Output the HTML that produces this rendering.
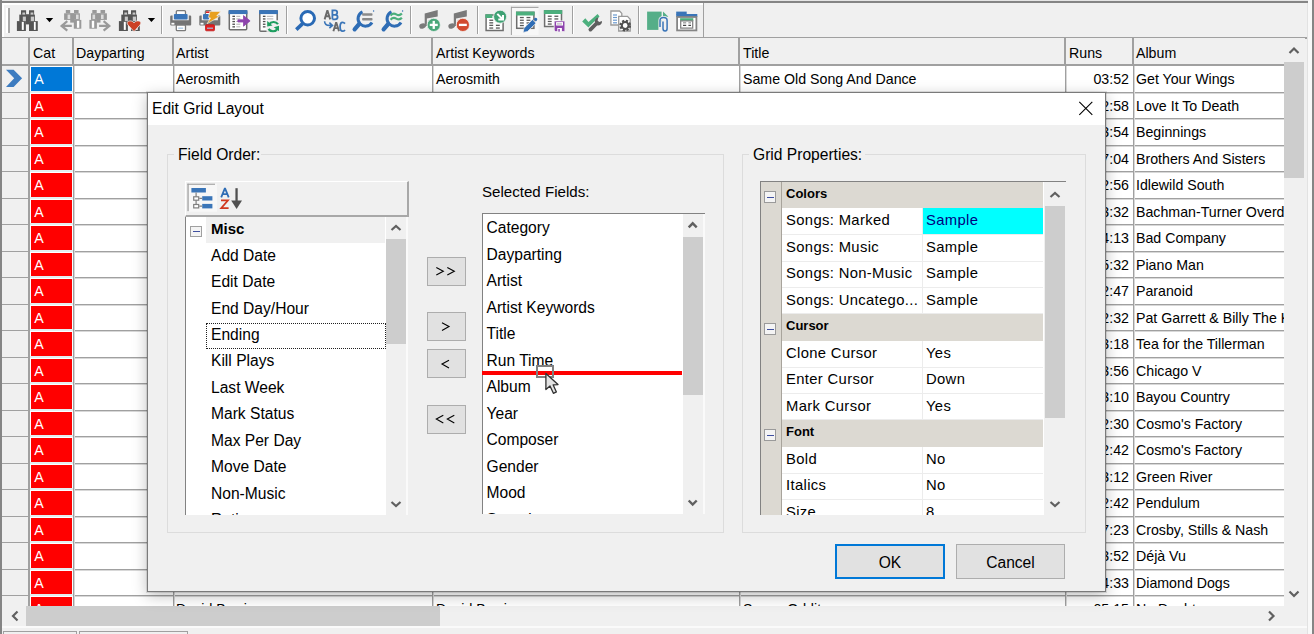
<!DOCTYPE html><html><head><meta charset="utf-8"><style>

*{box-sizing:border-box;margin:0;padding:0}
html,body{width:1314px;height:634px;overflow:hidden;background:#f0f0f0;font-family:"Liberation Sans",sans-serif;}
.ab{position:absolute}
.t{position:absolute;white-space:pre;color:#000}

</style></head><body>
<div class="ab" style="left:0;top:0;width:1314px;height:1px;background:#e6e6e6"></div>
<div class="ab" style="left:0;top:1px;width:1308px;height:2px;background:#858585"></div>
<div class="ab" style="left:0;top:0;width:2px;height:634px;background:#858585"></div>
<div class="ab" style="left:2px;top:3px;width:701px;height:2px;background:#fff"></div>
<div class="ab" style="left:2px;top:3px;width:2px;height:35px;background:#fff"></div>
<div class="ab" style="left:1308px;top:0;width:4px;height:634px;background:#f8f8f8"></div>
<div class="ab" style="left:1312px;top:0;width:2px;height:634px;background:#858585"></div>
<div class="ab" style="left:1307px;top:3px;width:1px;height:631px;background:#e2e2e2"></div>
<div class="ab" style="left:703px;top:3px;width:1px;height:35px;background:#a0a0a0"></div>
<div class="ab" style="left:2px;top:37px;width:1305px;height:2px;background:#a0a0a0"></div>
<div class="ab" style="left:6px;top:8px;width:2px;height:25px;background:#fff"></div>
<div class="ab" style="left:8px;top:8px;width:2px;height:25px;background:#a8a8a8"></div>
<svg class="ab" style="left:0;top:0" width="710" height="38" viewBox="0 0 710 38"><g transform="translate(14,8)" fill="#555555"><rect x="7" y="2.25" width="5.1" height="4.6"/><rect x="15" y="2.25" width="5.1" height="4.6"/><rect x="12" y="6.4" width="3" height="10"/><rect x="5.3" y="6.6" width="15.6" height="6.9"/><rect x="2.9" y="13.1" width="9" height="9.9"/><rect x="15" y="13.1" width="8.8" height="9.9"/><rect x="8.4" y="4.5" width="2.7" height="2.1" fill="#c8c8c8"/><rect x="16.6" y="4.5" width="2.7" height="2.1" fill="#c8c8c8"/><rect x="8.8" y="8.6" width="3.1" height="4.5" fill="#c8c8c8"/><rect x="16.8" y="8.6" width="3.3" height="4.5" fill="#c8c8c8"/><rect x="7.8" y="13.9" width="2" height="8" fill="#fff"/><rect x="19.9" y="13.9" width="1.8" height="8" fill="#fff"/></g><path d="M45.8 18 H53.2 L49.5 22.2 Z" fill="#000"/><g transform="translate(57,8)" fill="#999999"><rect x="8.8" y="2" width="4.4" height="3.5"/><rect x="17" y="2" width="4.6" height="3.5"/><rect x="7.1" y="5.3" width="15.8" height="6.6"/><rect x="13.2" y="5.3" width="3.8" height="9.3"/><rect x="16.8" y="11.9" width="7.5" height="8.8"/><rect x="10.6" y="6.6" width="2.6" height="4.4" fill="#dcdcdc"/><rect x="19" y="6.6" width="2.6" height="4.4" fill="#dcdcdc"/><rect x="19.9" y="12.8" width="2.4" height="7" fill="#fff"/><path d="M4 17.9 H14.8 M10.3 13.2 L4.6 17.9 L10.3 22.6" stroke="#999" stroke-width="2.2" fill="none"/></g><g transform="translate(57,8)" fill="#999999"><rect x="35.3" y="2" width="4.4" height="3.5"/><rect x="43.5" y="2" width="4.6" height="3.5"/><rect x="34" y="5.3" width="15.9" height="6.6"/><rect x="39.7" y="5.3" width="3.8" height="9.3"/><rect x="32.4" y="11.9" width="7.5" height="8.8"/><rect x="35.5" y="6.6" width="2.6" height="4.4" fill="#dcdcdc"/><rect x="44" y="6.6" width="2.6" height="4.4" fill="#dcdcdc"/><rect x="34.8" y="12.8" width="2.4" height="7" fill="#fff"/><path d="M42.1 17.9 H52.9 M46.6 13.2 L52.3 17.9 L46.6 22.6" stroke="#999" stroke-width="2.2" fill="none"/></g><g transform="translate(116,8)" fill="#555555"><rect x="7" y="2.25" width="5.1" height="4.6"/><rect x="15" y="2.25" width="5.1" height="4.6"/><rect x="12" y="6.4" width="3" height="10"/><rect x="5.3" y="6.6" width="15.6" height="6.9"/><rect x="2.9" y="13.1" width="9" height="9.9"/><rect x="15" y="13.1" width="8.8" height="9.9"/><rect x="8.4" y="4.5" width="2.7" height="2.1" fill="#c8c8c8"/><rect x="16.6" y="4.5" width="2.7" height="2.1" fill="#c8c8c8"/><rect x="8.8" y="8.6" width="3.1" height="4.5" fill="#c8c8c8"/><rect x="16.8" y="8.6" width="3.3" height="4.5" fill="#c8c8c8"/><rect x="7.8" y="13.9" width="2" height="8" fill="#fff"/><rect x="19.9" y="13.9" width="1.8" height="8" fill="#fff"/></g><path d="M134 31.6 L128.2 25.2 C126 22.6 127.5 20.9 130.3 20.9 C132.2 20.9 133.4 22 134 23 C134.6 22 135.8 20.9 137.7 20.9 C140.5 20.9 142 22.6 139.8 25.2 Z" fill="#cc4125" stroke="#f0f0f0" stroke-width="0.8"/><path d="M147.8 18 H155.1 L151.45 22.1 Z" fill="#000"/><rect x="161" y="6" width="1" height="28" fill="#a0a0a0"/><rect x="162" y="6" width="1" height="28" fill="#fff"/><g transform="translate(166,7)"><rect x="10.3" y="3.7" width="9.2" height="5" rx="1" fill="#fff" stroke="#7a7a7a" stroke-width="1.3"/><path d="M4.2 9.6 Q4.2 8.6 5.2 8.6 H6.6 V13.2 H22.8 V8.6 H24.2 Q25.2 8.6 25.2 9.6 V17.5 Q25.2 18.5 24.2 18.5 H5.2 Q4.2 18.5 4.2 17.5 Z" fill="#747474"/><rect x="7.9" y="7.1" width="13.7" height="5.5" rx="1" fill="#3a75b8"/><rect x="5.4" y="15.8" width="3" height="1.8" fill="#fff"/><rect x="10.3" y="18" width="9.2" height="5.7" rx="1" fill="#fff" stroke="#7a7a7a" stroke-width="1.3"/><rect x="12.2" y="20.6" width="5" height="1.1" fill="#9bbfe0"/></g><g transform="translate(166,7)"><rect x="39.4" y="3.7" width="5.6" height="5" rx="1" fill="#fff" stroke="#7a7a7a" stroke-width="1.3"/><rect x="40" y="4.4" width="3.7" height="1.6" fill="#e02020"/><path d="M33.3 9.6 Q33.3 8.6 34.3 8.6 H35.7 V13.2 H51.9 V8.6 H53.3 Q54.3 8.6 54.3 9.6 V17.5 Q54.3 18.5 53.3 18.5 H34.3 Q33.3 18.5 33.3 17.5 Z" fill="#747474"/><rect x="37" y="7.1" width="6" height="5.5" rx="1" fill="#3a75b8"/><rect x="34.5" y="15.8" width="3" height="1.8" fill="#fff"/><rect x="39.5" y="17.7" width="9" height="6.1" rx="1" fill="#e02020" stroke="#c01818" stroke-width="0.8"/><rect x="41" y="20.6" width="6" height="1.2" fill="#9bbfe0"/><path d="M44.1 4.4 L54.7 4.4 L50.8 8.8 L53.4 9.5 L41 16.8 L44.6 11 L42.4 10.4 Z" fill="#e8a020" stroke="#f0f0f0" stroke-width="0.6"/></g><g transform="translate(226,7)"><rect x="3.3" y="3.8" width="17.4" height="18.900000000000002" rx="1" fill="#fff" stroke="#6e6e6e" stroke-width="1.5"/><rect x="2.6" y="3.1" width="18.8" height="4" fill="#3a75b8"/><rect x="6.4" y="8.7" width="2.6" height="1.3" fill="#505050"/><rect x="10.3" y="8.8" width="4" height="1" fill="#b0b0b0"/><rect x="6.4" y="11.3" width="2.6" height="1.3" fill="#505050"/><rect x="10.3" y="11.4" width="4" height="1" fill="#b0b0b0"/><rect x="6.4" y="13.9" width="2.6" height="1.3" fill="#505050"/><rect x="10.3" y="14.0" width="4" height="1" fill="#b0b0b0"/><rect x="6.4" y="16.6" width="2.6" height="1.3" fill="#505050"/><rect x="10.3" y="16.7" width="4" height="1" fill="#b0b0b0"/><rect x="6.4" y="19.2" width="2.6" height="1.3" fill="#505050"/><rect x="10.3" y="19.3" width="4" height="1" fill="#b0b0b0"/><rect x="33.8" y="3.8" width="17.4" height="20.5" rx="1" fill="#fff" stroke="#6e6e6e" stroke-width="1.5"/><rect x="33.1" y="3.1" width="18.8" height="4" fill="#3a75b8"/><rect x="36.9" y="8.7" width="2.6" height="1.3" fill="#505050"/><rect x="40.8" y="8.8" width="6.5" height="1" fill="#b0b0b0"/><rect x="36.9" y="11.3" width="2.6" height="1.3" fill="#505050"/><rect x="40.8" y="11.4" width="6.5" height="1" fill="#b0b0b0"/><rect x="36.9" y="13.9" width="2.6" height="1.3" fill="#505050"/><rect x="40.8" y="14.0" width="6.5" height="1" fill="#b0b0b0"/><rect x="36.9" y="16.6" width="2.6" height="1.3" fill="#505050"/><rect x="40.8" y="16.7" width="6.5" height="1" fill="#b0b0b0"/><rect x="36.9" y="19.2" width="2.6" height="1.3" fill="#505050"/><rect x="40.8" y="19.3" width="6.5" height="1" fill="#b0b0b0"/><path d="M11.9 12.8 H17.5 V8.6 L24.1 13.9 L17.5 19.2 V15 H11.9 Z" fill="#8e44ad" stroke="#8e44ad" stroke-width="0.8" stroke-linejoin="round"/><rect x="40.5" y="13.3" width="13" height="11.5" fill="#f0f0f0"/><path d="M43 17.5 A5.5 5.5 0 0 1 52 17.2 M51.5 21.8 A5.5 5.5 0 0 1 42.5 22" stroke="#1e9e60" stroke-width="2.2" fill="none"/><path d="M41.2 14 L41.2 19.5 L46.5 18.6 Z M53 18.8 L53 24.2 L47.8 20.2 Z" fill="#1e9e60"/></g><rect x="286" y="6" width="1" height="28" fill="#a0a0a0"/><rect x="287" y="6" width="1" height="28" fill="#fff"/><g transform="translate(292,7)"><circle cx="15.7" cy="11.25" r="6.8" fill="#fff" stroke="#2a6ab5" stroke-width="3"/><path d="M10.6 16.6 L4.3 22.6" stroke="#2a6ab5" stroke-width="3.6"/><path d="M32.6 12.4 L35.4 3.3 L38.2 12.4 M33.7 9.2 H37.1" stroke="#6a6a6a" stroke-width="1.9" fill="none" stroke-linejoin="bevel"/><path d="M40.4 12.3 V3.4 H43 Q45.2 3.4 45.2 5.6 Q45.2 7.8 43 7.8 H40.4 M43 7.8 Q45.6 7.8 45.6 10 Q45.6 12.3 43 12.3 H40.4" stroke="#3a75b8" stroke-width="1.8" fill="none"/><path d="M32.6 14.2 Q32.6 18.4 37.5 18.4 H40.5 M37.4 15.6 L40.5 18.4 L37.4 21.2" stroke="#3a75b8" stroke-width="1.6" fill="none"/><path d="M41.4 24.3 L44.2 15.2 L47 24.3 M42.5 21.1 H45.9" stroke="#6a6a6a" stroke-width="1.9" fill="none" stroke-linejoin="bevel"/><path d="M53 16.6 Q52 15.4 50.6 15.4 Q48.1 15.4 48.1 19.8 Q48.1 24.2 50.6 24.2 Q52 24.2 53 23" stroke="#3a75b8" stroke-width="1.8" fill="none"/></g><g transform="translate(350,7)"><path d="M12.5 4.8 A7.5 7.5 0 1 0 22 15.5" stroke="#2f6db5" stroke-width="3" fill="none"/><path d="M9.2 17 L4.6 22.3" stroke="#2f6db5" stroke-width="4.2" stroke-linecap="round"/><circle cx="23.6" cy="4" r="0.7" fill="#2f6db5"/><path d="M41.5 4.8 A7.5 7.5 0 1 0 51 15.5" stroke="#2f6db5" stroke-width="3" fill="none"/><path d="M38.2 17 L33.6 22.3" stroke="#2f6db5" stroke-width="4.2" stroke-linecap="round"/><circle cx="52.6" cy="4" r="0.7" fill="#2f6db5"/><rect x="12.1" y="6.2" width="10.4" height="2.6" rx="0.8" fill="#8a8a8a"/><rect x="12.1" y="11" width="10.4" height="2.5" rx="0.8" fill="#8a8a8a"/><path d="M40.6 8.6 Q43 5.6 46.3 7.4 Q49.5 9.2 51.9 6.6 M40.6 12.8 Q43 9.8 46.3 11.6 Q49.5 13.4 51.9 10.8" stroke="#4caf7d" stroke-width="2.2" fill="none"/></g><rect x="410" y="6" width="1" height="28" fill="#a0a0a0"/><rect x="411" y="6" width="1" height="28" fill="#fff"/><g transform="translate(415,7)"><path d="M9.7 6.4 L22.7 3.1 V9.5 L11.9 11.6 V19 H9.7 Z" fill="#7a7a7a"/><ellipse cx="7.6" cy="19" rx="3.4" ry="2.6" fill="#7a7a7a" transform="rotate(-15 7.6 19)"/><path d="M38.8 6.4 L51.8 3.1 V9.5 L41.0 11.6 V19 H38.8 Z" fill="#7a7a7a"/><ellipse cx="36.7" cy="19" rx="3.4" ry="2.6" fill="#7a7a7a" transform="rotate(-15 36.7 19)"/><circle cx="18.75" cy="17.9" r="6.6" fill="#4aa77a" stroke="#f0f0f0" stroke-width="0.8"/><rect x="17.6" y="13.9" width="2.3" height="8" fill="#fff"/><rect x="14.75" y="16.75" width="8" height="2.3" fill="#fff"/><circle cx="47.85" cy="17.9" r="6.6" fill="#d24a2e" stroke="#f0f0f0" stroke-width="0.8"/><rect x="43.9" y="16.75" width="7.9" height="2.3" fill="#fff"/></g><rect x="477" y="6" width="1" height="28" fill="#a0a0a0"/><rect x="478" y="6" width="1" height="28" fill="#fff"/><g transform="translate(482,5)"><rect x="4.1" y="10" width="17" height="15.5" fill="#fff" stroke="#6e6e6e" stroke-width="1.5"/><rect x="3.4" y="9.3" width="7" height="3.7" fill="#4caf7d"/><rect x="7.3" y="14.6" width="3.9" height="1.3" fill="#5a5a5a"/><rect x="7.3" y="17.2" width="3.9" height="1.3" fill="#5a5a5a"/><rect x="7.3" y="19.7" width="3.9" height="1.3" fill="#5a5a5a"/><rect x="7.3" y="22.4" width="3.9" height="1.3" fill="#5a5a5a"/><rect x="13.9" y="19.7" width="3.9" height="1.3" fill="#5a5a5a"/><rect x="13.9" y="22.4" width="3.9" height="1.3" fill="#5a5a5a"/><circle cx="18.1" cy="11.7" r="6.5" fill="#3fa174" stroke="#f0f0f0" stroke-width="0.8"/><path d="M15.3 8.9 L20.2 13.8 M21 9.9 V14.6 H16.3" stroke="#fff" stroke-width="2" fill="none"/><rect x="29" y="2" width="27.5" height="28" fill="#f7f7f7"/><rect x="29" y="1.8" width="27.5" height="1.2" fill="#a8a8a8"/><rect x="28.9" y="1.8" width="1" height="28.2" fill="#a0a0a0"/><rect x="34.7" y="7.3" width="17.2" height="16" fill="#fff" stroke="#6e6e6e" stroke-width="1.5"/><rect x="34" y="6.6" width="18.6" height="3.9" fill="#4caf7d"/><rect x="37.9" y="11.9" width="3.9" height="1.3" fill="#5a5a5a"/><rect x="44.5" y="11.9" width="3.9" height="1.3" fill="#5a5a5a"/><rect x="37.9" y="14.6" width="3.9" height="1.3" fill="#5a5a5a"/><rect x="44.5" y="14.6" width="3.9" height="1.3" fill="#5a5a5a"/><rect x="37.9" y="17.299999999999997" width="3.9" height="1.3" fill="#5a5a5a"/><rect x="44.5" y="17.299999999999997" width="3.9" height="1.3" fill="#5a5a5a"/><rect x="37.9" y="19.9" width="3.9" height="1.3" fill="#5a5a5a"/><rect x="44.5" y="19.9" width="3.9" height="1.3" fill="#5a5a5a"/><path d="M41.1 27.4 L42 23.2 L50.4 14.6 L54 18.2 L45.4 26.6 Z" fill="#2f6db5" stroke="#f0f0f0" stroke-width="0.7"/><path d="M51.6 14.2 L52.7 13.1 Q53.8 12.2 54.9 13.3 Q55.8 14.4 54.9 15.4 L53.8 16.5 Z" fill="#2f6db5"/></g><g transform="translate(540,5)"><rect x="4.6" y="5.8" width="16.9" height="15.7" fill="#fff" stroke="#6e6e6e" stroke-width="1.5"/><rect x="3.9" y="5.1" width="18.3" height="3.9" fill="#4caf7d"/><rect x="7.8" y="10.6" width="3.9" height="1.3" fill="#5a5a5a"/><rect x="7.8" y="13.3" width="3.9" height="1.3" fill="#5a5a5a"/><rect x="7.8" y="15.799999999999999" width="3.9" height="1.3" fill="#5a5a5a"/><rect x="7.8" y="18.4" width="3.9" height="1.3" fill="#5a5a5a"/><rect x="14.4" y="10.6" width="3.9" height="1.3" fill="#5a5a5a"/><rect x="14.4" y="13.3" width="3.9" height="1.3" fill="#5a5a5a"/><path d="M14.2 15.9 H24.9 V26.6 H15.6 L14.2 25.2 Z" fill="#8e44ad" stroke="#f0f0f0" stroke-width="0.8"/><rect x="16.1" y="17.1" width="6.9" height="3.4" fill="#fff"/><rect x="17" y="18.5" width="5" height="0.9" fill="#a0a0a0"/><rect x="17.3" y="23" width="4.6" height="3.6" fill="#fff"/><rect x="18.3" y="24" width="1.5" height="2.6" fill="#8e44ad"/></g><rect x="572" y="6" width="1" height="28" fill="#a0a0a0"/><rect x="573" y="6" width="1" height="28" fill="#fff"/><g transform="translate(578,5)"><path d="M4.2 16.4 L7.3 13.2 L10.5 16.9 L19.6 9 L21.5 11.5 L10.5 22.5 Z" fill="#4caf7d"/><path d="M12.4 24.6 L18.5 18.5" stroke="#f0f0f0" stroke-width="5.6"/><path d="M12.4 24.6 L18.5 18.5" stroke="#5f5f5f" stroke-width="3.8" stroke-linecap="round"/><path d="M17 17.5 A4 4 0 0 1 20.4 12.4 L19.6 15.4 L21.2 16.9 L24 15.9 A4 4 0 0 1 19 20.3 Z" fill="#5f5f5f"/><path d="M32.9 6 H41.5 L43.8 8.4 V20 H32.9 Z" fill="#fff" stroke="#9a9a9a" stroke-width="1.3"/><rect x="35" y="9.4" width="4" height="1.2" fill="#6a9ad0"/><rect x="35" y="11.9" width="4" height="1.2" fill="#6a9ad0"/><rect x="35" y="14.6" width="4" height="1.2" fill="#6a9ad0"/><rect x="35" y="17.2" width="4" height="1.2" fill="#6a9ad0"/><path d="M40.7 11.4 H49.5 L52.2 14.2 V26 H40.7 Z" fill="#fff" stroke="#9a9a9a" stroke-width="1.3"/><circle cx="47.2" cy="20.5" r="4.3" fill="none" stroke="#505050" stroke-width="3.2" stroke-dasharray="2 1.38"/><circle cx="47.2" cy="20.5" r="3.4" fill="none" stroke="#505050" stroke-width="2"/><circle cx="47.2" cy="20.5" r="1.6" fill="#fff"/></g><rect x="638" y="6" width="1" height="28" fill="#a0a0a0"/><rect x="639" y="6" width="1" height="28" fill="#fff"/><g transform="translate(642,5)"><path d="M5.1 6.6 H19.6 V24.9 H5.1 Z" fill="#55ae88"/><path d="M21 6.4 L26.4 11.7 H21 Z" fill="#55ae88"/><path d="M18 26 V15.5 Q18 12.6 21.55 12.6 Q25.1 12.6 25.1 15.5 V23.5 Q25.1 26 23.1 26 Q21 26 21 23.5 V16.5" stroke="#f0f0f0" stroke-width="3.2" fill="none"/><path d="M18 22 V15.5 Q18 12.6 21.55 12.6 Q25.1 12.6 25.1 15.5 V23.5 Q25.1 26 23.1 26 Q21 26 21 23.5 V16.5" stroke="#3a75b8" stroke-width="1.5" fill="none"/><rect x="34.2" y="6.6" width="10.5" height="3" fill="#3a75b8"/><rect x="34.2" y="9" width="21.1" height="3" fill="#3a75b8"/><rect x="35.1" y="12" width="19.3" height="13.4" fill="#fff" stroke="#858585" stroke-width="1.8"/><rect x="38.1" y="13.2" width="13.2" height="2.8" fill="#4caf7d"/><rect x="38.7" y="15.9" width="12" height="7.2" fill="#fff" stroke="#858585" stroke-width="1.3"/><rect x="41" y="17.3" width="3.2" height="1.1" fill="#888"/><rect x="46.4" y="17.3" width="2.6" height="1.1" fill="#888"/><rect x="41" y="19.8" width="3.2" height="1.1" fill="#303030"/><rect x="46.4" y="19.8" width="2.6" height="1.1" fill="#303030"/></g></svg>
<div class="ab" style="left:2px;top:38px;width:1282px;height:568px;background:#fff"></div>
<div class="ab" style="left:2px;top:38px;width:1282px;height:27px;background:#f0f0f0"></div>
<div class="ab" style="left:2px;top:64px;width:1282px;height:2px;background:#a0a0a0"></div>
<div class="ab" style="left:28px;top:38px;width:2px;height:27px;background:#a0a0a0"></div>
<div class="ab" style="left:72px;top:38px;width:2px;height:27px;background:#a0a0a0"></div>
<div class="ab" style="left:172px;top:38px;width:2px;height:27px;background:#a0a0a0"></div>
<div class="ab" style="left:431px;top:38px;width:2px;height:27px;background:#a0a0a0"></div>
<div class="ab" style="left:738px;top:38px;width:2px;height:27px;background:#a0a0a0"></div>
<div class="ab" style="left:1064px;top:38px;width:2px;height:27px;background:#a0a0a0"></div>
<div class="ab" style="left:1132px;top:38px;width:2px;height:27px;background:#a0a0a0"></div>
<div class="t" style="left:33px;top:45.78px;font-size:14.2px;line-height:14.2px;">Cat</div>
<div class="t" style="left:76px;top:45.78px;font-size:14.2px;line-height:14.2px;">Dayparting</div>
<div class="t" style="left:176px;top:45.78px;font-size:14.2px;line-height:14.2px;">Artist</div>
<div class="t" style="left:436px;top:45.78px;font-size:14.2px;line-height:14.2px;">Artist Keywords</div>
<div class="t" style="left:743px;top:45.78px;font-size:14.2px;line-height:14.2px;">Title</div>
<div class="t" style="left:1069px;top:45.78px;font-size:14.2px;line-height:14.2px;">Runs</div>
<div class="t" style="left:1136px;top:45.78px;font-size:14.2px;line-height:14.2px;">Album</div>
<div class="ab" style="left:2px;top:66px;width:26px;height:540px;background:#f0f0f0"></div>
<div class="ab" style="left:28px;top:66px;width:2px;height:540px;background:#a0a0a0"></div>
<div class="ab" style="left:0;top:0;width:1284px;height:606px;overflow:hidden">
<div class="ab" style="left:2px;top:92px;width:26px;height:1px;background:#a0a0a0"></div>
<div class="ab" style="left:30px;top:91px;width:43px;height:2px;background:#e4eef0"></div>
<div class="ab" style="left:73px;top:92px;width:1211px;height:1px;background:#a0a0a0"></div>
<div class="ab" style="left:73px;top:93px;width:1211px;height:1px;background:#d8d8d8"></div>
<div class="ab" style="left:31px;top:67px;width:41px;height:24px;background:#0078d7"></div>
<div class="t" style="left:34.2px;top:72.28px;font-size:14.2px;line-height:14.2px;color:#fff">A</div>
<div class="t" style="left:176px;top:72.28px;font-size:14.2px;line-height:14.2px;">Aerosmith</div>
<div class="t" style="left:436px;top:72.28px;font-size:14.2px;line-height:14.2px;">Aerosmith</div>
<div class="t" style="left:743px;top:72.28px;font-size:14.2px;line-height:14.2px;">Same Old Song And Dance</div>
<div class="t" style="left:1066px;top:72.28px;width:63px;text-align:right;font-size:14.2px;line-height:14.2px">03:52</div>
<div class="t" style="left:1136px;top:72.28px;font-size:14.2px;line-height:14.2px;">Get Your Wings</div>
<svg class="ab" style="left:0;top:60px" width="28" height="32" viewBox="0 60 28 32"><path d="M6 69.8 H13.6 L22.1 78.3 L13.6 87.1 H6 L14.2 78.3 Z" fill="#3d7cc0"/></svg>
<div class="ab" style="left:2px;top:118px;width:26px;height:1px;background:#a0a0a0"></div>
<div class="ab" style="left:30px;top:117px;width:43px;height:2px;background:#e4eef0"></div>
<div class="ab" style="left:73px;top:118px;width:1211px;height:1px;background:#a0a0a0"></div>
<div class="ab" style="left:73px;top:119px;width:1211px;height:1px;background:#d8d8d8"></div>
<div class="ab" style="left:31px;top:94px;width:41px;height:23px;background:#ff0000"></div>
<div class="t" style="left:34.2px;top:98.78px;font-size:14.2px;line-height:14.2px;color:#fff">A</div>
<div class="t" style="left:176px;top:98.78px;font-size:14.2px;line-height:14.2px;">Alice Cooper</div>
<div class="t" style="left:436px;top:98.78px;font-size:14.2px;line-height:14.2px;">Alice Cooper</div>
<div class="t" style="left:743px;top:98.78px;font-size:14.2px;line-height:14.2px;">I'm Eighteen</div>
<div class="t" style="left:1066px;top:98.78px;width:63px;text-align:right;font-size:14.2px;line-height:14.2px">02:58</div>
<div class="t" style="left:1136px;top:98.78px;font-size:14.2px;line-height:14.2px;">Love It To Death</div>
<div class="ab" style="left:2px;top:145px;width:26px;height:1px;background:#a0a0a0"></div>
<div class="ab" style="left:30px;top:144px;width:43px;height:2px;background:#e4eef0"></div>
<div class="ab" style="left:73px;top:145px;width:1211px;height:1px;background:#a0a0a0"></div>
<div class="ab" style="left:73px;top:146px;width:1211px;height:1px;background:#d8d8d8"></div>
<div class="ab" style="left:31px;top:120px;width:41px;height:24px;background:#ff0000"></div>
<div class="t" style="left:34.2px;top:125.28px;font-size:14.2px;line-height:14.2px;color:#fff">A</div>
<div class="t" style="left:176px;top:125.28px;font-size:14.2px;line-height:14.2px;">Chicago</div>
<div class="t" style="left:436px;top:125.28px;font-size:14.2px;line-height:14.2px;">Chicago</div>
<div class="t" style="left:743px;top:125.28px;font-size:14.2px;line-height:14.2px;">Beginnings</div>
<div class="t" style="left:1066px;top:125.28px;width:63px;text-align:right;font-size:14.2px;line-height:14.2px">03:54</div>
<div class="t" style="left:1136px;top:125.28px;font-size:14.2px;line-height:14.2px;">Beginnings</div>
<div class="ab" style="left:2px;top:171px;width:26px;height:1px;background:#a0a0a0"></div>
<div class="ab" style="left:30px;top:170px;width:43px;height:2px;background:#e4eef0"></div>
<div class="ab" style="left:73px;top:171px;width:1211px;height:1px;background:#a0a0a0"></div>
<div class="ab" style="left:73px;top:172px;width:1211px;height:1px;background:#d8d8d8"></div>
<div class="ab" style="left:31px;top:147px;width:41px;height:23px;background:#ff0000"></div>
<div class="t" style="left:34.2px;top:151.78px;font-size:14.2px;line-height:14.2px;color:#fff">A</div>
<div class="t" style="left:176px;top:151.78px;font-size:14.2px;line-height:14.2px;">Allman Brothers</div>
<div class="t" style="left:436px;top:151.78px;font-size:14.2px;line-height:14.2px;">Allman Brothers</div>
<div class="t" style="left:743px;top:151.78px;font-size:14.2px;line-height:14.2px;">Jessica</div>
<div class="t" style="left:1066px;top:151.78px;width:63px;text-align:right;font-size:14.2px;line-height:14.2px">07:04</div>
<div class="t" style="left:1136px;top:151.78px;font-size:14.2px;line-height:14.2px;">Brothers And Sisters</div>
<div class="ab" style="left:2px;top:198px;width:26px;height:1px;background:#a0a0a0"></div>
<div class="ab" style="left:30px;top:197px;width:43px;height:2px;background:#e4eef0"></div>
<div class="ab" style="left:73px;top:198px;width:1211px;height:1px;background:#a0a0a0"></div>
<div class="ab" style="left:73px;top:199px;width:1211px;height:1px;background:#d8d8d8"></div>
<div class="ab" style="left:31px;top:173px;width:41px;height:24px;background:#ff0000"></div>
<div class="t" style="left:34.2px;top:178.28px;font-size:14.2px;line-height:14.2px;color:#fff">A</div>
<div class="t" style="left:176px;top:178.28px;font-size:14.2px;line-height:14.2px;">Allman Brothers</div>
<div class="t" style="left:436px;top:178.28px;font-size:14.2px;line-height:14.2px;">Allman Brothers</div>
<div class="t" style="left:743px;top:178.28px;font-size:14.2px;line-height:14.2px;">Midnight Rider</div>
<div class="t" style="left:1066px;top:178.28px;width:63px;text-align:right;font-size:14.2px;line-height:14.2px">02:56</div>
<div class="t" style="left:1136px;top:178.28px;font-size:14.2px;line-height:14.2px;">Idlewild South</div>
<div class="ab" style="left:2px;top:224px;width:26px;height:1px;background:#a0a0a0"></div>
<div class="ab" style="left:30px;top:223px;width:43px;height:2px;background:#e4eef0"></div>
<div class="ab" style="left:73px;top:224px;width:1211px;height:1px;background:#a0a0a0"></div>
<div class="ab" style="left:73px;top:225px;width:1211px;height:1px;background:#d8d8d8"></div>
<div class="ab" style="left:31px;top:200px;width:41px;height:23px;background:#ff0000"></div>
<div class="t" style="left:34.2px;top:204.78px;font-size:14.2px;line-height:14.2px;color:#fff">A</div>
<div class="t" style="left:176px;top:204.78px;font-size:14.2px;line-height:14.2px;">BTO</div>
<div class="t" style="left:436px;top:204.78px;font-size:14.2px;line-height:14.2px;">BTO</div>
<div class="t" style="left:743px;top:204.78px;font-size:14.2px;line-height:14.2px;">Let It Ride</div>
<div class="t" style="left:1066px;top:204.78px;width:63px;text-align:right;font-size:14.2px;line-height:14.2px">03:32</div>
<div class="t" style="left:1136px;top:204.78px;font-size:14.2px;line-height:14.2px;">Bachman-Turner Overdrive II</div>
<div class="ab" style="left:2px;top:251px;width:26px;height:1px;background:#a0a0a0"></div>
<div class="ab" style="left:30px;top:250px;width:43px;height:2px;background:#e4eef0"></div>
<div class="ab" style="left:73px;top:251px;width:1211px;height:1px;background:#a0a0a0"></div>
<div class="ab" style="left:73px;top:252px;width:1211px;height:1px;background:#d8d8d8"></div>
<div class="ab" style="left:31px;top:226px;width:41px;height:24px;background:#ff0000"></div>
<div class="t" style="left:34.2px;top:231.28px;font-size:14.2px;line-height:14.2px;color:#fff">A</div>
<div class="t" style="left:176px;top:231.28px;font-size:14.2px;line-height:14.2px;">Bad Company</div>
<div class="t" style="left:436px;top:231.28px;font-size:14.2px;line-height:14.2px;">Bad Company</div>
<div class="t" style="left:743px;top:231.28px;font-size:14.2px;line-height:14.2px;">Can't Get Enough</div>
<div class="t" style="left:1066px;top:231.28px;width:63px;text-align:right;font-size:14.2px;line-height:14.2px">04:13</div>
<div class="t" style="left:1136px;top:231.28px;font-size:14.2px;line-height:14.2px;">Bad Company</div>
<div class="ab" style="left:2px;top:277px;width:26px;height:1px;background:#a0a0a0"></div>
<div class="ab" style="left:30px;top:276px;width:43px;height:2px;background:#e4eef0"></div>
<div class="ab" style="left:73px;top:277px;width:1211px;height:1px;background:#a0a0a0"></div>
<div class="ab" style="left:73px;top:278px;width:1211px;height:1px;background:#d8d8d8"></div>
<div class="ab" style="left:31px;top:253px;width:41px;height:23px;background:#ff0000"></div>
<div class="t" style="left:34.2px;top:257.78px;font-size:14.2px;line-height:14.2px;color:#fff">A</div>
<div class="t" style="left:176px;top:257.78px;font-size:14.2px;line-height:14.2px;">Billy Joel</div>
<div class="t" style="left:436px;top:257.78px;font-size:14.2px;line-height:14.2px;">Billy Joel</div>
<div class="t" style="left:743px;top:257.78px;font-size:14.2px;line-height:14.2px;">Piano Man</div>
<div class="t" style="left:1066px;top:257.78px;width:63px;text-align:right;font-size:14.2px;line-height:14.2px">05:32</div>
<div class="t" style="left:1136px;top:257.78px;font-size:14.2px;line-height:14.2px;">Piano Man</div>
<div class="ab" style="left:2px;top:304px;width:26px;height:1px;background:#a0a0a0"></div>
<div class="ab" style="left:30px;top:303px;width:43px;height:2px;background:#e4eef0"></div>
<div class="ab" style="left:73px;top:304px;width:1211px;height:1px;background:#a0a0a0"></div>
<div class="ab" style="left:73px;top:305px;width:1211px;height:1px;background:#d8d8d8"></div>
<div class="ab" style="left:31px;top:279px;width:41px;height:24px;background:#ff0000"></div>
<div class="t" style="left:34.2px;top:284.28px;font-size:14.2px;line-height:14.2px;color:#fff">A</div>
<div class="t" style="left:176px;top:284.28px;font-size:14.2px;line-height:14.2px;">Black Sabbath</div>
<div class="t" style="left:436px;top:284.28px;font-size:14.2px;line-height:14.2px;">Black Sabbath</div>
<div class="t" style="left:743px;top:284.28px;font-size:14.2px;line-height:14.2px;">Paranoid</div>
<div class="t" style="left:1066px;top:284.28px;width:63px;text-align:right;font-size:14.2px;line-height:14.2px">02:47</div>
<div class="t" style="left:1136px;top:284.28px;font-size:14.2px;line-height:14.2px;">Paranoid</div>
<div class="ab" style="left:2px;top:330px;width:26px;height:1px;background:#a0a0a0"></div>
<div class="ab" style="left:30px;top:329px;width:43px;height:2px;background:#e4eef0"></div>
<div class="ab" style="left:73px;top:330px;width:1211px;height:1px;background:#a0a0a0"></div>
<div class="ab" style="left:73px;top:331px;width:1211px;height:1px;background:#d8d8d8"></div>
<div class="ab" style="left:31px;top:306px;width:41px;height:23px;background:#ff0000"></div>
<div class="t" style="left:34.2px;top:310.78px;font-size:14.2px;line-height:14.2px;color:#fff">A</div>
<div class="t" style="left:176px;top:310.78px;font-size:14.2px;line-height:14.2px;">Bob Dylan</div>
<div class="t" style="left:436px;top:310.78px;font-size:14.2px;line-height:14.2px;">Bob Dylan</div>
<div class="t" style="left:743px;top:310.78px;font-size:14.2px;line-height:14.2px;">Knockin' On Heaven's Door</div>
<div class="t" style="left:1066px;top:310.78px;width:63px;text-align:right;font-size:14.2px;line-height:14.2px">02:32</div>
<div class="t" style="left:1136px;top:310.78px;font-size:14.2px;line-height:14.2px;">Pat Garrett &amp; Billy The Kid</div>
<div class="ab" style="left:2px;top:357px;width:26px;height:1px;background:#a0a0a0"></div>
<div class="ab" style="left:30px;top:356px;width:43px;height:2px;background:#e4eef0"></div>
<div class="ab" style="left:73px;top:357px;width:1211px;height:1px;background:#a0a0a0"></div>
<div class="ab" style="left:73px;top:358px;width:1211px;height:1px;background:#d8d8d8"></div>
<div class="ab" style="left:31px;top:332px;width:41px;height:24px;background:#ff0000"></div>
<div class="t" style="left:34.2px;top:337.28px;font-size:14.2px;line-height:14.2px;color:#fff">A</div>
<div class="t" style="left:176px;top:337.28px;font-size:14.2px;line-height:14.2px;">Cat Stevens</div>
<div class="t" style="left:436px;top:337.28px;font-size:14.2px;line-height:14.2px;">Cat Stevens</div>
<div class="t" style="left:743px;top:337.28px;font-size:14.2px;line-height:14.2px;">Wild World</div>
<div class="t" style="left:1066px;top:337.28px;width:63px;text-align:right;font-size:14.2px;line-height:14.2px">03:18</div>
<div class="t" style="left:1136px;top:337.28px;font-size:14.2px;line-height:14.2px;">Tea for the Tillerman</div>
<div class="ab" style="left:2px;top:383px;width:26px;height:1px;background:#a0a0a0"></div>
<div class="ab" style="left:30px;top:382px;width:43px;height:2px;background:#e4eef0"></div>
<div class="ab" style="left:73px;top:383px;width:1211px;height:1px;background:#a0a0a0"></div>
<div class="ab" style="left:73px;top:384px;width:1211px;height:1px;background:#d8d8d8"></div>
<div class="ab" style="left:31px;top:359px;width:41px;height:23px;background:#ff0000"></div>
<div class="t" style="left:34.2px;top:363.78px;font-size:14.2px;line-height:14.2px;color:#fff">A</div>
<div class="t" style="left:176px;top:363.78px;font-size:14.2px;line-height:14.2px;">Chicago</div>
<div class="t" style="left:436px;top:363.78px;font-size:14.2px;line-height:14.2px;">Chicago</div>
<div class="t" style="left:743px;top:363.78px;font-size:14.2px;line-height:14.2px;">Saturday In The Park</div>
<div class="t" style="left:1066px;top:363.78px;width:63px;text-align:right;font-size:14.2px;line-height:14.2px">03:56</div>
<div class="t" style="left:1136px;top:363.78px;font-size:14.2px;line-height:14.2px;">Chicago V</div>
<div class="ab" style="left:2px;top:410px;width:26px;height:1px;background:#a0a0a0"></div>
<div class="ab" style="left:30px;top:409px;width:43px;height:2px;background:#e4eef0"></div>
<div class="ab" style="left:73px;top:410px;width:1211px;height:1px;background:#a0a0a0"></div>
<div class="ab" style="left:73px;top:411px;width:1211px;height:1px;background:#d8d8d8"></div>
<div class="ab" style="left:31px;top:385px;width:41px;height:24px;background:#ff0000"></div>
<div class="t" style="left:34.2px;top:390.28px;font-size:14.2px;line-height:14.2px;color:#fff">A</div>
<div class="t" style="left:176px;top:390.28px;font-size:14.2px;line-height:14.2px;">CCR</div>
<div class="t" style="left:436px;top:390.28px;font-size:14.2px;line-height:14.2px;">CCR</div>
<div class="t" style="left:743px;top:390.28px;font-size:14.2px;line-height:14.2px;">Proud Mary</div>
<div class="t" style="left:1066px;top:390.28px;width:63px;text-align:right;font-size:14.2px;line-height:14.2px">03:10</div>
<div class="t" style="left:1136px;top:390.28px;font-size:14.2px;line-height:14.2px;">Bayou Country</div>
<div class="ab" style="left:2px;top:436px;width:26px;height:1px;background:#a0a0a0"></div>
<div class="ab" style="left:30px;top:435px;width:43px;height:2px;background:#e4eef0"></div>
<div class="ab" style="left:73px;top:436px;width:1211px;height:1px;background:#a0a0a0"></div>
<div class="ab" style="left:73px;top:437px;width:1211px;height:1px;background:#d8d8d8"></div>
<div class="ab" style="left:31px;top:412px;width:41px;height:23px;background:#ff0000"></div>
<div class="t" style="left:34.2px;top:416.78px;font-size:14.2px;line-height:14.2px;color:#fff">A</div>
<div class="t" style="left:176px;top:416.78px;font-size:14.2px;line-height:14.2px;">CCR</div>
<div class="t" style="left:436px;top:416.78px;font-size:14.2px;line-height:14.2px;">CCR</div>
<div class="t" style="left:743px;top:416.78px;font-size:14.2px;line-height:14.2px;">Up Around The Bend</div>
<div class="t" style="left:1066px;top:416.78px;width:63px;text-align:right;font-size:14.2px;line-height:14.2px">02:30</div>
<div class="t" style="left:1136px;top:416.78px;font-size:14.2px;line-height:14.2px;">Cosmo's Factory</div>
<div class="ab" style="left:2px;top:463px;width:26px;height:1px;background:#a0a0a0"></div>
<div class="ab" style="left:30px;top:462px;width:43px;height:2px;background:#e4eef0"></div>
<div class="ab" style="left:73px;top:463px;width:1211px;height:1px;background:#a0a0a0"></div>
<div class="ab" style="left:73px;top:464px;width:1211px;height:1px;background:#d8d8d8"></div>
<div class="ab" style="left:31px;top:438px;width:41px;height:24px;background:#ff0000"></div>
<div class="t" style="left:34.2px;top:443.28px;font-size:14.2px;line-height:14.2px;color:#fff">A</div>
<div class="t" style="left:176px;top:443.28px;font-size:14.2px;line-height:14.2px;">CCR</div>
<div class="t" style="left:436px;top:443.28px;font-size:14.2px;line-height:14.2px;">CCR</div>
<div class="t" style="left:743px;top:443.28px;font-size:14.2px;line-height:14.2px;">Lookin' Out My Back Door</div>
<div class="t" style="left:1066px;top:443.28px;width:63px;text-align:right;font-size:14.2px;line-height:14.2px">02:42</div>
<div class="t" style="left:1136px;top:443.28px;font-size:14.2px;line-height:14.2px;">Cosmo's Factory</div>
<div class="ab" style="left:2px;top:489px;width:26px;height:1px;background:#a0a0a0"></div>
<div class="ab" style="left:30px;top:488px;width:43px;height:2px;background:#e4eef0"></div>
<div class="ab" style="left:73px;top:489px;width:1211px;height:1px;background:#a0a0a0"></div>
<div class="ab" style="left:73px;top:490px;width:1211px;height:1px;background:#d8d8d8"></div>
<div class="ab" style="left:31px;top:465px;width:41px;height:23px;background:#ff0000"></div>
<div class="t" style="left:34.2px;top:469.78px;font-size:14.2px;line-height:14.2px;color:#fff">A</div>
<div class="t" style="left:176px;top:469.78px;font-size:14.2px;line-height:14.2px;">CCR</div>
<div class="t" style="left:436px;top:469.78px;font-size:14.2px;line-height:14.2px;">CCR</div>
<div class="t" style="left:743px;top:469.78px;font-size:14.2px;line-height:14.2px;">Bad Moon Rising</div>
<div class="t" style="left:1066px;top:469.78px;width:63px;text-align:right;font-size:14.2px;line-height:14.2px">03:12</div>
<div class="t" style="left:1136px;top:469.78px;font-size:14.2px;line-height:14.2px;">Green River</div>
<div class="ab" style="left:2px;top:516px;width:26px;height:1px;background:#a0a0a0"></div>
<div class="ab" style="left:30px;top:515px;width:43px;height:2px;background:#e4eef0"></div>
<div class="ab" style="left:73px;top:516px;width:1211px;height:1px;background:#a0a0a0"></div>
<div class="ab" style="left:73px;top:517px;width:1211px;height:1px;background:#d8d8d8"></div>
<div class="ab" style="left:31px;top:491px;width:41px;height:24px;background:#ff0000"></div>
<div class="t" style="left:34.2px;top:496.28px;font-size:14.2px;line-height:14.2px;color:#fff">A</div>
<div class="t" style="left:176px;top:496.28px;font-size:14.2px;line-height:14.2px;">CCR</div>
<div class="t" style="left:436px;top:496.28px;font-size:14.2px;line-height:14.2px;">CCR</div>
<div class="t" style="left:743px;top:496.28px;font-size:14.2px;line-height:14.2px;">Have You Ever Seen The Rain</div>
<div class="t" style="left:1066px;top:496.28px;width:63px;text-align:right;font-size:14.2px;line-height:14.2px">02:42</div>
<div class="t" style="left:1136px;top:496.28px;font-size:14.2px;line-height:14.2px;">Pendulum</div>
<div class="ab" style="left:2px;top:542px;width:26px;height:1px;background:#a0a0a0"></div>
<div class="ab" style="left:30px;top:541px;width:43px;height:2px;background:#e4eef0"></div>
<div class="ab" style="left:73px;top:542px;width:1211px;height:1px;background:#a0a0a0"></div>
<div class="ab" style="left:73px;top:543px;width:1211px;height:1px;background:#d8d8d8"></div>
<div class="ab" style="left:31px;top:518px;width:41px;height:23px;background:#ff0000"></div>
<div class="t" style="left:34.2px;top:522.78px;font-size:14.2px;line-height:14.2px;color:#fff">A</div>
<div class="t" style="left:176px;top:522.78px;font-size:14.2px;line-height:14.2px;">CSN</div>
<div class="t" style="left:436px;top:522.78px;font-size:14.2px;line-height:14.2px;">CSN</div>
<div class="t" style="left:743px;top:522.78px;font-size:14.2px;line-height:14.2px;">Suite: Judy Blue Eyes</div>
<div class="t" style="left:1066px;top:522.78px;width:63px;text-align:right;font-size:14.2px;line-height:14.2px">07:23</div>
<div class="t" style="left:1136px;top:522.78px;font-size:14.2px;line-height:14.2px;">Crosby, Stills &amp; Nash</div>
<div class="ab" style="left:2px;top:569px;width:26px;height:1px;background:#a0a0a0"></div>
<div class="ab" style="left:30px;top:568px;width:43px;height:2px;background:#e4eef0"></div>
<div class="ab" style="left:73px;top:569px;width:1211px;height:1px;background:#a0a0a0"></div>
<div class="ab" style="left:73px;top:570px;width:1211px;height:1px;background:#d8d8d8"></div>
<div class="ab" style="left:31px;top:544px;width:41px;height:24px;background:#ff0000"></div>
<div class="t" style="left:34.2px;top:549.28px;font-size:14.2px;line-height:14.2px;color:#fff">A</div>
<div class="t" style="left:176px;top:549.28px;font-size:14.2px;line-height:14.2px;">CSNY</div>
<div class="t" style="left:436px;top:549.28px;font-size:14.2px;line-height:14.2px;">CSNY</div>
<div class="t" style="left:743px;top:549.28px;font-size:14.2px;line-height:14.2px;">Teach Your Children</div>
<div class="t" style="left:1066px;top:549.28px;width:63px;text-align:right;font-size:14.2px;line-height:14.2px">03:52</div>
<div class="t" style="left:1136px;top:549.28px;font-size:14.2px;line-height:14.2px;">D&eacute;j&agrave; Vu</div>
<div class="ab" style="left:2px;top:595px;width:26px;height:1px;background:#a0a0a0"></div>
<div class="ab" style="left:30px;top:594px;width:43px;height:2px;background:#e4eef0"></div>
<div class="ab" style="left:73px;top:595px;width:1211px;height:1px;background:#a0a0a0"></div>
<div class="ab" style="left:73px;top:596px;width:1211px;height:1px;background:#d8d8d8"></div>
<div class="ab" style="left:31px;top:571px;width:41px;height:23px;background:#ff0000"></div>
<div class="t" style="left:34.2px;top:575.78px;font-size:14.2px;line-height:14.2px;color:#fff">A</div>
<div class="t" style="left:176px;top:575.78px;font-size:14.2px;line-height:14.2px;">David Bowie</div>
<div class="t" style="left:436px;top:575.78px;font-size:14.2px;line-height:14.2px;">David Bowie</div>
<div class="t" style="left:743px;top:575.78px;font-size:14.2px;line-height:14.2px;">Rebel Rebel</div>
<div class="t" style="left:1066px;top:575.78px;width:63px;text-align:right;font-size:14.2px;line-height:14.2px">04:33</div>
<div class="t" style="left:1136px;top:575.78px;font-size:14.2px;line-height:14.2px;">Diamond Dogs</div>
<div class="ab" style="left:2px;top:622px;width:26px;height:1px;background:#a0a0a0"></div>
<div class="ab" style="left:30px;top:621px;width:43px;height:2px;background:#e4eef0"></div>
<div class="ab" style="left:73px;top:622px;width:1211px;height:1px;background:#a0a0a0"></div>
<div class="ab" style="left:73px;top:623px;width:1211px;height:1px;background:#d8d8d8"></div>
<div class="ab" style="left:31px;top:597px;width:41px;height:24px;background:#ff0000"></div>
<div class="t" style="left:34.2px;top:602.28px;font-size:14.2px;line-height:14.2px;color:#fff">A</div>
<div class="t" style="left:176px;top:602.28px;font-size:14.2px;line-height:14.2px;">David Bowie</div>
<div class="t" style="left:436px;top:602.28px;font-size:14.2px;line-height:14.2px;">David Bowie</div>
<div class="t" style="left:743px;top:602.28px;font-size:14.2px;line-height:14.2px;">Space Oddity</div>
<div class="t" style="left:1066px;top:602.28px;width:63px;text-align:right;font-size:14.2px;line-height:14.2px">05:15</div>
<div class="t" style="left:1136px;top:602.28px;font-size:14.2px;line-height:14.2px;">No Doubt</div>
<div class="ab" style="left:73px;top:66px;width:1px;height:540px;background:#a0a0a0"></div>
<div class="ab" style="left:74px;top:66px;width:1px;height:540px;background:#d8d8d8"></div>
<div class="ab" style="left:173px;top:66px;width:1px;height:540px;background:#a0a0a0"></div>
<div class="ab" style="left:174px;top:66px;width:1px;height:540px;background:#d8d8d8"></div>
<div class="ab" style="left:432px;top:66px;width:1px;height:540px;background:#a0a0a0"></div>
<div class="ab" style="left:433px;top:66px;width:1px;height:540px;background:#d8d8d8"></div>
<div class="ab" style="left:739px;top:66px;width:1px;height:540px;background:#a0a0a0"></div>
<div class="ab" style="left:740px;top:66px;width:1px;height:540px;background:#d8d8d8"></div>
<div class="ab" style="left:1065px;top:66px;width:1px;height:540px;background:#a0a0a0"></div>
<div class="ab" style="left:1066px;top:66px;width:1px;height:540px;background:#d8d8d8"></div>
<div class="ab" style="left:1133px;top:66px;width:1px;height:540px;background:#a0a0a0"></div>
<div class="ab" style="left:1134px;top:66px;width:1px;height:540px;background:#d8d8d8"></div>
</div>
<div class="ab" style="left:1284px;top:38px;width:21px;height:568px;background:#f0f0f0"></div>
<div class="ab" style="left:1284px;top:62px;width:20px;height:116px;background:#cdcdcd"></div>
<svg class="ab" style="left:1284px;top:38px" width="20" height="24" viewBox="0 0 20 24"><path d="M5.5 15 L10 10.5 L14.5 15" stroke="#606060" stroke-width="2.2" fill="none"/></svg>
<svg class="ab" style="left:1284px;top:582px" width="20" height="24" viewBox="0 0 20 24"><path d="M5.5 9.5 L10 14 L14.5 9.5" stroke="#606060" stroke-width="2.2" fill="none"/></svg>
<div class="ab" style="left:2px;top:606px;width:1303px;height:20px;background:#f0f0f0"></div>
<div class="ab" style="left:26px;top:606px;width:414px;height:20px;background:#cdcdcd"></div>
<svg class="ab" style="left:4px;top:606px" width="20" height="20" viewBox="0 0 20 20"><path d="M13.5 5.5 L9 10 L13.5 14.5" stroke="#606060" stroke-width="2.2" fill="none"/></svg>
<svg class="ab" style="left:1262px;top:606px" width="20" height="20" viewBox="0 0 20 20"><path d="M7 5.5 L11.5 10 L7 14.5" stroke="#606060" stroke-width="2.2" fill="none"/></svg>
<div class="ab" style="left:2px;top:626px;width:1305px;height:2px;background:#fafafa"></div>
<div class="ab" style="left:3px;top:631px;width:74px;height:3px;border-top:1px solid #a0a0a0;border-left:1px solid #a0a0a0;border-right:1px solid #a0a0a0"></div>
<div class="ab" style="left:79px;top:631px;width:109px;height:3px;border-top:1px solid #a0a0a0;border-left:1px solid #a0a0a0;border-right:1px solid #a0a0a0"></div>
<div class="ab" style="left:147px;top:92px;width:959px;height:500px;background:#f0f0f0;border:1px solid #7a7a7a;box-shadow:0 0 0 1px rgba(0,0,0,0.10),0 4px 14px rgba(0,0,0,0.25)"></div>
<div class="ab" style="left:148px;top:93px;width:957px;height:32px;background:#fff"></div>
<div class="t" style="left:152px;top:100.69px;font-size:15.6px;line-height:15.6px;">Edit Grid Layout</div>
<svg class="ab" style="left:1075px;top:98px" width="21" height="21" viewBox="0 0 21 21"><path d="M4.3 3.9 L17.3 16.9 M17.3 3.9 L4.3 16.9" stroke="#000" stroke-width="1.1"/></svg>
<div class="ab" style="left:167px;top:154px;width:557px;height:379px;border:1px solid #dcdcdc"></div>
<div class="ab" style="left:174px;top:146px;width:87px;height:16px;background:#f0f0f0"></div>
<div class="t" style="left:178px;top:146.89px;font-size:15.6px;line-height:15.6px;">Field Order:</div>
<div class="ab" style="left:742px;top:154px;width:344px;height:379px;border:1px solid #dcdcdc"></div>
<div class="ab" style="left:749px;top:146px;width:116px;height:16px;background:#f0f0f0"></div>
<div class="t" style="left:753px;top:146.89px;font-size:15.6px;line-height:15.6px;">Grid Properties:</div>
<div class="ab" style="z-index:2;left:185px;top:181px;width:224px;height:36px;background:#f0f0f0;border-top:1px solid #fff;border-left:1px solid #fff;border-right:2px solid #a8a8a8;border-bottom:2px solid #a8a8a8"></div>
<svg class="ab" style="z-index:3;left:184px;top:180px" width="70" height="36" viewBox="0 0 70 36"><rect x="3.5" y="3.8" width="29.5" height="28" fill="#f7f7f7"/><rect x="3.4" y="3.7" width="27.6" height="1.1" fill="#a0a0a0"/><rect x="3.4" y="3.7" width="1.3" height="27.5" fill="#a0a0a0"/><rect x="7.4" y="8" width="14.5" height="4.5" fill="#3a75b8"/><rect x="18.2" y="16.2" width="10.2" height="4.3" fill="#3a75b8"/><rect x="18.2" y="23.9" width="10.2" height="4.5" fill="#3a75b8"/><path d="M12.1 12.5 V23.9 M15.3 18.35 H18.2 M15.3 26.1 H18.2" stroke="#808080" stroke-width="1.2" fill="none"/><rect x="9.7" y="16.8" width="5" height="3.4" fill="#fff" stroke="#808080" stroke-width="1.2"/><rect x="9.7" y="24.5" width="5" height="3.4" fill="#fff" stroke="#808080" stroke-width="1.2"/><path d="M37.2 17.4 L40.95 8.2 L44.7 17.4 M38.6 14.2 H43.3" stroke="#2f6db5" stroke-width="1.8" fill="none" stroke-linejoin="bevel"/><path d="M37 20.4 H44 L37.2 28.2 H44.6" stroke="#d0381f" stroke-width="1.7" fill="none"/><path d="M52.55 8.2 V23" stroke="#505050" stroke-width="2.3"/><path d="M47.2 20.5 H58 L52.6 29 Z" fill="#505050"/></svg>
<div class="ab" style="left:185px;top:215px;width:223px;height:300px;background:#fff;border-left:1px solid #828282;overflow:hidden">
<div class="ab" style="left:20px;top:2px;width:179px;height:26px;background:#f0f0f0"></div>
<div class="ab" style="left:4px;top:11px;width:12px;height:11px;border:1px solid #a0a0a0;background:#f4f4f4"></div>
<div class="ab" style="left:6.5px;top:16px;width:7px;height:1.2px;background:#4050a0"></div>
<div class="t" style="left:25px;top:6.00px;font-size:15px;line-height:15px;font-weight:bold">Misc</div>
<div class="t" style="left:25px;top:32.59px;font-size:15.6px;line-height:15.6px;">Add Date</div>
<div class="t" style="left:25px;top:59.05px;font-size:15.6px;line-height:15.6px;">Edit Date</div>
<div class="t" style="left:25px;top:85.51px;font-size:15.6px;line-height:15.6px;">End Day/Hour</div>
<div class="t" style="left:25px;top:111.97px;font-size:15.6px;line-height:15.6px;">Ending</div>
<div class="t" style="left:25px;top:138.43px;font-size:15.6px;line-height:15.6px;">Kill Plays</div>
<div class="t" style="left:25px;top:164.89px;font-size:15.6px;line-height:15.6px;">Last Week</div>
<div class="t" style="left:25px;top:191.35px;font-size:15.6px;line-height:15.6px;">Mark Status</div>
<div class="t" style="left:25px;top:217.81px;font-size:15.6px;line-height:15.6px;">Max Per Day</div>
<div class="t" style="left:25px;top:244.27px;font-size:15.6px;line-height:15.6px;">Move Date</div>
<div class="t" style="left:25px;top:270.73px;font-size:15.6px;line-height:15.6px;">Non-Music</div>
<div class="t" style="left:25px;top:297.19px;font-size:15.6px;line-height:15.6px;">Rating</div>
<div class="ab" style="left:20px;top:108px;width:180px;height:26px;border:1px dotted #202020"></div>
<div class="ab" style="left:200px;top:0;width:23px;height:300px;background:#f0f0f0"></div>
<div class="ab" style="left:200px;top:24px;width:20px;height:105px;background:#cdcdcd"></div>
<svg class="ab" style="left:200px;top:0" width="20" height="24" viewBox="0 0 20 24"><path d="M5.5 15 L10 11 L14.5 15" stroke="#606060" stroke-width="2.2" fill="none"/></svg>
<svg class="ab" style="left:200px;top:277px" width="20" height="24" viewBox="0 0 20 24"><path d="M5.5 10 L10 14 L14.5 10" stroke="#606060" stroke-width="2.2" fill="none"/></svg>
<div class="ab" style="left:220px;top:0;width:3px;height:300px;background:#fafafa"></div>
</div>
<div class="ab" style="left:427px;top:257px;width:39px;height:29px;background:#e1e1e1;border:1px solid #adadad"></div>
<div class="t" style="left:427px;top:-13.21px;width:39px;text-align:center;font-size:15.6px;line-height:15.6px"></div>
<div class="ab" style="left:427px;top:312px;width:39px;height:29px;background:#e1e1e1;border:1px solid #adadad"></div>
<div class="t" style="left:427px;top:-13.21px;width:39px;text-align:center;font-size:15.6px;line-height:15.6px"></div>
<div class="ab" style="left:427px;top:349px;width:39px;height:29px;background:#e1e1e1;border:1px solid #adadad"></div>
<div class="t" style="left:427px;top:-13.21px;width:39px;text-align:center;font-size:15.6px;line-height:15.6px"></div>
<div class="ab" style="left:427px;top:405px;width:39px;height:29px;background:#e1e1e1;border:1px solid #adadad"></div>
<div class="t" style="left:427px;top:-13.21px;width:39px;text-align:center;font-size:15.6px;line-height:15.6px"></div>
<svg class="ab" style="left:0;top:0" width="500" height="450" viewBox="0 0 500 450"><g stroke="#000" stroke-width="1.1" fill="none" stroke-linejoin="miter"><path d="M436.3 267.6 L443.3 271.3 L436.3 275"/><path d="M447.3 267.6 L454.3 271.3 L447.3 275"/><path d="M442 322.8 L449 326.6 L442 330.4"/><path d="M449 360.3 L442 364.1 L449 367.9"/><path d="M443.3 415.3 L436.3 419.1 L443.3 422.9"/><path d="M454.3 415.3 L447.3 419.1 L454.3 422.9"/></g></svg>
<div class="t" style="left:482px;top:184.12px;font-size:15.1px;line-height:15.1px;">Selected Fields:</div>
<div class="ab" style="left:482px;top:213px;width:223px;height:301px;background:#fff;border-left:1px solid #828282;border-top:1px solid #828282;overflow:hidden">
<div class="t" style="left:3.5px;top:6.29px;font-size:15.6px;line-height:15.6px;">Category</div>
<div class="t" style="left:3.5px;top:32.79px;font-size:15.6px;line-height:15.6px;">Dayparting</div>
<div class="t" style="left:3.5px;top:59.29px;font-size:15.6px;line-height:15.6px;">Artist</div>
<div class="t" style="left:3.5px;top:85.79px;font-size:15.6px;line-height:15.6px;">Artist Keywords</div>
<div class="t" style="left:3.5px;top:112.29px;font-size:15.6px;line-height:15.6px;">Title</div>
<div class="t" style="left:3.5px;top:138.79px;font-size:15.6px;line-height:15.6px;">Run Time</div>
<div class="t" style="left:3.5px;top:165.29px;font-size:15.6px;line-height:15.6px;">Album</div>
<div class="t" style="left:3.5px;top:191.79px;font-size:15.6px;line-height:15.6px;">Year</div>
<div class="t" style="left:3.5px;top:218.29px;font-size:15.6px;line-height:15.6px;">Composer</div>
<div class="t" style="left:3.5px;top:244.79px;font-size:15.6px;line-height:15.6px;">Gender</div>
<div class="t" style="left:3.5px;top:271.29px;font-size:15.6px;line-height:15.6px;">Mood</div>
<div class="t" style="left:3.5px;top:297.79px;font-size:15.6px;line-height:15.6px;">Sound</div>
<div class="ab" style="left:200px;top:0;width:23px;height:301px;background:#f0f0f0"></div>
<div class="ab" style="left:200px;top:23px;width:20px;height:158px;background:#cdcdcd"></div>
<div class="ab" style="left:220px;top:0;width:3px;height:301px;background:#fafafa"></div>
<svg class="ab" style="left:200px;top:0" width="20" height="24" viewBox="0 0 20 24"><path d="M5.7 13.3 L9.7 9.3 L13.7 13.3" stroke="#606060" stroke-width="2.4" fill="none"/></svg>
<svg class="ab" style="left:200px;top:277px" width="20" height="24" viewBox="0 0 20 24"><path d="M5.7 9.5 L9.7 13.5 L13.7 9.5" stroke="#606060" stroke-width="2.4" fill="none"/></svg>
</div>
<div class="ab" style="left:482px;top:371px;width:200px;height:4px;background:#ff0000"></div>
<div class="ab" style="left:536px;top:365px;width:18px;height:13px;border:2px solid #808080"></div>
<svg class="ab" style="left:544px;top:372px" width="18" height="26" viewBox="0 0 18 26"><path d="M1.9 1.4 L1.9 17.6 L6 14 L9.4 21.3 L12.4 19.9 L9.2 12.9 L14 12.6 Z" fill="#e4e4e4" stroke="#303030" stroke-width="1.3" stroke-linejoin="round"/></svg>
<div class="ab" style="left:760px;top:181px;width:306px;height:334px;background:#fff;border-top:1px solid #828282;border-left:1px solid #828282;overflow:hidden">
<div class="ab" style="left:0;top:0;width:20px;height:334px;background:#dcd9d2"></div>
<div class="ab" style="left:20px;top:0;width:1px;height:334px;background:#a8a49c"></div>
<div class="ab" style="left:21px;top:0px;width:261px;height:26px;background:#dcd9d2"></div>
<div class="ab" style="left:3px;top:9px;width:12px;height:12px;border:1px solid #9a9a9a;background:#f4f4f4"></div>
<div class="ab" style="left:5.5px;top:14.5px;width:7px;height:1.2px;background:#4050a0"></div>
<div class="t" style="left:25px;top:4.80px;font-size:13px;line-height:13px;font-weight:bold">Colors</div>
<div class="ab" style="left:162px;top:26px;width:120px;height:27px;background:#00ffff"></div>
<div class="ab" style="left:21px;top:52px;width:261px;height:1px;background:#ececec"></div>
<div class="ab" style="left:161px;top:26px;width:1px;height:27px;background:#ececec"></div>
<div class="t" style="left:25px;top:31.07px;font-size:14.8px;line-height:14.8px;letter-spacing:0.35px">Songs: Marked</div>
<div class="t" style="left:165px;top:31.07px;font-size:14.8px;line-height:14.8px;letter-spacing:0.35px;color:#000080">Sample</div>
<div class="ab" style="left:21px;top:79px;width:261px;height:1px;background:#ececec"></div>
<div class="ab" style="left:161px;top:53px;width:1px;height:27px;background:#ececec"></div>
<div class="t" style="left:25px;top:57.57px;font-size:14.8px;line-height:14.8px;letter-spacing:0.35px">Songs: Music</div>
<div class="t" style="left:165px;top:57.57px;font-size:14.8px;line-height:14.8px;letter-spacing:0.35px;color:#000">Sample</div>
<div class="ab" style="left:21px;top:105px;width:261px;height:1px;background:#ececec"></div>
<div class="ab" style="left:161px;top:80px;width:1px;height:26px;background:#ececec"></div>
<div class="t" style="left:25px;top:84.07px;font-size:14.8px;line-height:14.8px;letter-spacing:0.35px">Songs: Non-Music</div>
<div class="t" style="left:165px;top:84.07px;font-size:14.8px;line-height:14.8px;letter-spacing:0.35px;color:#000">Sample</div>
<div class="ab" style="left:21px;top:131px;width:261px;height:1px;background:#ececec"></div>
<div class="ab" style="left:161px;top:106px;width:1px;height:26px;background:#ececec"></div>
<div class="t" style="left:25px;top:110.57px;font-size:14.8px;line-height:14.8px;letter-spacing:0.35px">Songs: Uncatego...</div>
<div class="t" style="left:165px;top:110.57px;font-size:14.8px;line-height:14.8px;letter-spacing:0.35px;color:#000">Sample</div>
<div class="ab" style="left:21px;top:132px;width:261px;height:27px;background:#dcd9d2"></div>
<div class="ab" style="left:3px;top:141px;width:12px;height:12px;border:1px solid #9a9a9a;background:#f4f4f4"></div>
<div class="ab" style="left:5.5px;top:146.5px;width:7px;height:1.2px;background:#4050a0"></div>
<div class="t" style="left:25px;top:137.30px;font-size:13px;line-height:13px;font-weight:bold">Cursor</div>
<div class="ab" style="left:21px;top:185px;width:261px;height:1px;background:#ececec"></div>
<div class="ab" style="left:161px;top:159px;width:1px;height:27px;background:#ececec"></div>
<div class="t" style="left:25px;top:163.57px;font-size:14.8px;line-height:14.8px;letter-spacing:0.35px">Clone Cursor</div>
<div class="t" style="left:165px;top:163.57px;font-size:14.8px;line-height:14.8px;letter-spacing:0.35px;color:#000">Yes</div>
<div class="ab" style="left:21px;top:211px;width:261px;height:1px;background:#ececec"></div>
<div class="ab" style="left:161px;top:186px;width:1px;height:26px;background:#ececec"></div>
<div class="t" style="left:25px;top:190.07px;font-size:14.8px;line-height:14.8px;letter-spacing:0.35px">Enter Cursor</div>
<div class="t" style="left:165px;top:190.07px;font-size:14.8px;line-height:14.8px;letter-spacing:0.35px;color:#000">Down</div>
<div class="ab" style="left:21px;top:237px;width:261px;height:1px;background:#ececec"></div>
<div class="ab" style="left:161px;top:212px;width:1px;height:26px;background:#ececec"></div>
<div class="t" style="left:25px;top:216.57px;font-size:14.8px;line-height:14.8px;letter-spacing:0.35px">Mark Cursor</div>
<div class="t" style="left:165px;top:216.57px;font-size:14.8px;line-height:14.8px;letter-spacing:0.35px;color:#000">Yes</div>
<div class="ab" style="left:21px;top:238px;width:261px;height:27px;background:#dcd9d2"></div>
<div class="ab" style="left:3px;top:247px;width:12px;height:12px;border:1px solid #9a9a9a;background:#f4f4f4"></div>
<div class="ab" style="left:5.5px;top:252.5px;width:7px;height:1.2px;background:#4050a0"></div>
<div class="t" style="left:25px;top:243.30px;font-size:13px;line-height:13px;font-weight:bold">Font</div>
<div class="ab" style="left:21px;top:291px;width:261px;height:1px;background:#ececec"></div>
<div class="ab" style="left:161px;top:265px;width:1px;height:27px;background:#ececec"></div>
<div class="t" style="left:25px;top:269.57px;font-size:14.8px;line-height:14.8px;letter-spacing:0.35px">Bold</div>
<div class="t" style="left:165px;top:269.57px;font-size:14.8px;line-height:14.8px;letter-spacing:0.35px;color:#000">No</div>
<div class="ab" style="left:21px;top:317px;width:261px;height:1px;background:#ececec"></div>
<div class="ab" style="left:161px;top:292px;width:1px;height:26px;background:#ececec"></div>
<div class="t" style="left:25px;top:296.07px;font-size:14.8px;line-height:14.8px;letter-spacing:0.35px">Italics</div>
<div class="t" style="left:165px;top:296.07px;font-size:14.8px;line-height:14.8px;letter-spacing:0.35px;color:#000">No</div>
<div class="ab" style="left:21px;top:343px;width:261px;height:1px;background:#ececec"></div>
<div class="ab" style="left:161px;top:318px;width:1px;height:26px;background:#ececec"></div>
<div class="t" style="left:25px;top:322.57px;font-size:14.8px;line-height:14.8px;letter-spacing:0.35px">Size</div>
<div class="t" style="left:165px;top:322.57px;font-size:14.8px;line-height:14.8px;letter-spacing:0.35px;color:#000">8</div>
<div class="ab" style="left:283px;top:0;width:23px;height:334px;background:#f0f0f0"></div>
<div class="ab" style="left:284px;top:24px;width:20px;height:212px;background:#cdcdcd"></div>
<svg class="ab" style="left:284px;top:0" width="20" height="24" viewBox="0 0 20 24"><path d="M5.5 15 L10 11 L14.5 15" stroke="#606060" stroke-width="2.2" fill="none"/></svg>
<svg class="ab" style="left:284px;top:310px" width="20" height="24" viewBox="0 0 20 24"><path d="M5.5 10 L10 14 L14.5 10" stroke="#606060" stroke-width="2.2" fill="none"/></svg>
</div>
<div class="ab" style="left:835px;top:544px;width:110px;height:35px;background:#e1e1e1;border:2px solid #0078d7"></div>
<div class="t" style="left:835px;top:554.79px;width:110px;text-align:center;font-size:15.6px;line-height:15.6px">OK</div>
<div class="ab" style="left:956px;top:544px;width:109px;height:35px;background:#e1e1e1;border:1px solid #adadad"></div>
<div class="t" style="left:956px;top:554.79px;width:109px;text-align:center;font-size:15.6px;line-height:15.6px">Cancel</div>
</body></html>
